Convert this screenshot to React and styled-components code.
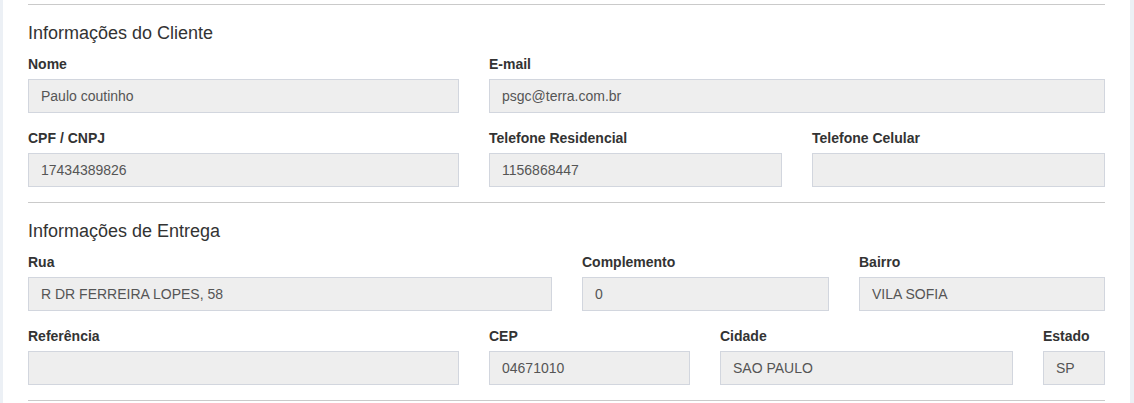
import React from "react";
import styled, { createGlobalStyle } from "styled-components";

const GlobalStyle = createGlobalStyle`
  html, body {
    margin: 0;
    padding: 0;
    background: #ecf0f5;
    font-family: "Liberation Sans", Arial, sans-serif;
    font-size: 14px;
    line-height: 1.42857;
    color: #333;
  }
  * { box-sizing: border-box; }
`;

const Page = styled.div`
  padding: 0 4px 0 3px;
`;

const Panel = styled.div`
  background: #fff;
  padding: 4px 25px 0 25px;
  height: 403px;
  overflow: hidden;
`;

const Divider = styled.hr`
  margin: 0 0 19px 0;
  border: 0;
  border-top: 1px solid #cacaca;
`;

const SectionTitle = styled.h4`
  margin: 0 0 10px 0;
  font-size: 18px;
  line-height: 1.1;
  font-weight: 400;
  color: #333;
`;

const Row = styled.div`
  display: grid;
  grid-template-columns: ${(p) => p.$cols};
  column-gap: 30px;
`;

const FormGroup = styled.div`
  margin-bottom: 15px;
  min-width: 0;
`;

const Label = styled.label`
  display: block;
  margin-bottom: 5px;
  font-weight: 700;
  font-size: 14px;
  line-height: 20px;
  color: #333;
`;

const Input = styled.div`
  height: 34px;
  padding: 6px 12px;
  font-size: 14px;
  line-height: 20px;
  color: #555;
  background: #eeeeee;
  border: 1px solid #d2d6de;
  white-space: nowrap;
  overflow: hidden;
`;

const Field = ({ label, value }) => (
  <FormGroup>
    <Label>{label}</Label>
    <Input>{value}</Input>
  </FormGroup>
);

export default function App() {
  return (
    <>
      <GlobalStyle />
      <Page>
        <Panel>
          <Divider />
          <SectionTitle>Informações do Cliente</SectionTitle>
          <Row $cols="431px 1fr">
            <Field label="Nome" value="Paulo coutinho" />
            <Field label="E-mail" value="psgc@terra.com.br" />
          </Row>
          <Row $cols="431px 293px 1fr">
            <Field label="CPF / CNPJ" value="17434389826" />
            <Field label="Telefone Residencial" value="1156868447" />
            <Field label="Telefone Celular" value="" />
          </Row>
          <Divider />
          <SectionTitle>Informações de Entrega</SectionTitle>
          <Row $cols="524px 247px 1fr">
            <Field label="Rua" value="R DR FERREIRA LOPES, 58" />
            <Field label="Complemento" value="0" />
            <Field label="Bairro" value="VILA SOFIA" />
          </Row>
          <Row $cols="431px 201px 293px 1fr">
            <Field label="Referência" value="" />
            <Field label="CEP" value="04671010" />
            <Field label="Cidade" value="SAO PAULO" />
            <Field label="Estado" value="SP" />
          </Row>
          <Divider />
        </Panel>
      </Page>
    </>
  );
}
